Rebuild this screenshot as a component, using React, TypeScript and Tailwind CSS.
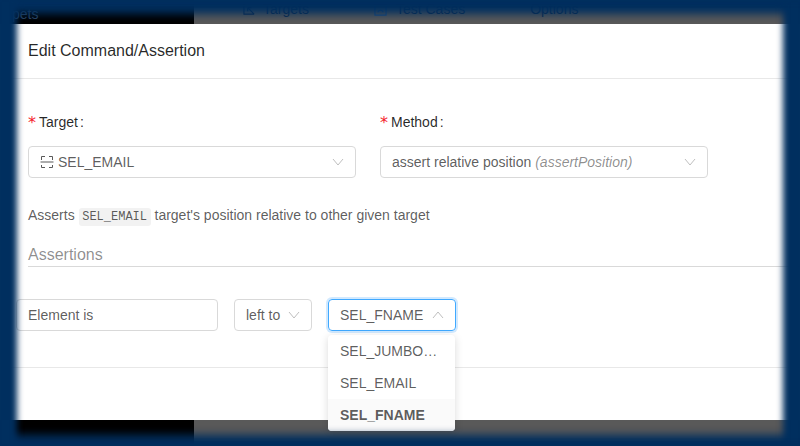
const sans = "font-['Liberation_Sans',Arial,sans-serif]";

function FieldLabel({ text }: { text: string }) {
  return (
    <div className="flex h-[20px] items-center text-[14px] text-black/85">
      <span className="mt-[1px] w-[11px] font-['DejaVu_Sans',sans-serif] text-[16px] leading-[14px] text-[#f5222d]">*</span>
      <span>{text}</span>
      <span className="ml-[2px]">:</span>
    </div>
  );
}

function TargetIcon() {
  return (
    <svg viewBox="0 0 14 14" className="mr-[4px] h-[14px] w-[14px] shrink-0" fill="none" stroke="#595959" strokeWidth="1">
      <path d="M1.5 5V1.5H5M9 1.5h3.5V5M1.5 10v2.5H5M9 12.5h3.5V10M0.5 7h13" />
    </svg>
  );
}

function Arrow({ up }: { up?: boolean }) {
  return (
    <svg viewBox="0 0 12 8" className="h-[8px] w-[12px] shrink-0" fill="none" stroke="#bfbfbf" strokeWidth="1">
      <path d={up ? "M1 7l5-6 5 6" : "M1 1l5 6 5-6"} />
    </svg>
  );
}

export default function App() {
  return (
    <div className={`relative h-[446px] w-[800px] overflow-hidden bg-[#595959] ${sans}`}>
      {/* page behind the modal */}
      <div className="flex h-full">
        <div className="h-full w-[194px] bg-black pl-[12px] pt-[4px] text-[14px] text-[#2e4763]">pets</div>
        <div className="-mt-[1px] flex h-[20px] flex-1 items-start text-[14px] text-[#0f2a4a]">
          <div className="ml-[49px] flex items-center gap-[7px]">
            <svg viewBox="0 0 14 14" className="h-[13px] w-[13px]" fill="none" stroke="#0f2a4a" strokeWidth="1.2">
              <path d="M1 1v11h11M5 5l7 7M5 5h4M5 5v4" />
            </svg>
            <span>Targets</span>
          </div>
          <div className="ml-[65px] flex items-center gap-[9px]">
            <svg viewBox="0 0 14 14" className="h-[13px] w-[13px]" fill="none" stroke="#1c4a80" strokeWidth="1.2">
              <path d="M1 1h12v12H1zM4 10c1-3 5-3 6 0" />
            </svg>
            <span>Test Cases</span>
          </div>
          <div className="ml-[65px]">Options</div>
        </div>
      </div>

      {/* modal */}
      <div className="absolute left-0 right-0 top-[24px] h-[396px] bg-white">
        <div className="flex h-[55px] items-center border-b border-[#e8e8e8] pl-[28px] text-[16px] text-black/85">
          Edit Command/Assertion
        </div>

        <div className="pl-[28px] pt-[33px]">
          <div className="flex gap-[24px]">
            <div className="w-[328px]">
              <FieldLabel text="Target" />
              <div className="mt-[14px] flex h-[32px] items-center justify-between rounded-[4px] border border-[#d9d9d9] px-[11px] text-[14px] text-black/65">
                <div className="flex items-center">
                  <TargetIcon />
                  <span>SEL_EMAIL</span>
                </div>
                <Arrow />
              </div>
            </div>
            <div className="w-[328px]">
              <FieldLabel text="Method" />
              <div className="mt-[14px] flex h-[32px] items-center justify-between rounded-[4px] border border-[#d9d9d9] px-[11px] text-[14px] text-black/65">
                <span>
                  assert relative position <em className="text-black/45">(assertPosition)</em>
                </span>
                <Arrow />
              </div>
            </div>
          </div>

          <div className="mt-[27px] flex h-[20px] items-center text-[14px] text-black/65">
            Asserts
            <code className="mx-[4px] mt-[4px] rounded-[3px] bg-[#f2f2f2] px-[3.5px] py-[1px] font-['Liberation_Mono','DejaVu_Sans_Mono',monospace] text-[12px] leading-[16px]">
              SEL_EMAIL
            </code>
            target's position relative to other given target
          </div>

          <div className="mt-[18px] h-[24px] border-b border-[#d9d9d9] text-[16px] leading-[23px] text-black/45">
            Assertions
          </div>
        </div>

        <div className="ml-[16px] mt-[32px] flex items-start gap-[16px]">
          <div className="flex h-[32px] w-[202px] items-center rounded-[4px] border border-[#d9d9d9] pl-[11px] text-[14px] text-black/65">
            Element is
          </div>
          <div className="flex h-[32px] w-[78px] items-center justify-between rounded-[4px] border border-[#d9d9d9] px-[11px] text-[14px] text-black/65">
            <span>left to</span>
            <Arrow />
          </div>
          <div className="relative w-[128px]">
            <div className="flex h-[32px] items-center justify-between rounded-[4px] border border-[#40a9ff] px-[11px] text-[14px] text-black/65 shadow-[0_0_0_2px_rgba(24,144,255,0.2)]">
              <span>SEL_FNAME</span>
              <Arrow up />
            </div>
            {/* open dropdown */}
            <div className="absolute left-0 top-[36px] w-[127px] overflow-hidden rounded-[4px] bg-white text-[14px] text-black/65 shadow-[0_2px_8px_rgba(0,0,0,0.15)]">
              <div className="flex h-[32px] items-center px-[12px]">SEL_JUMBO…</div>
              <div className="flex h-[32px] items-center px-[12px]">SEL_EMAIL</div>
              <div className="flex h-[32px] items-center bg-[#fafafa] px-[12px] font-bold">SEL_FNAME</div>
            </div>
          </div>
        </div>

        <div className="mt-[36px] border-t border-[#e8e8e8]" />
      </div>

      {/* navy vignette over everything */}
      <div className="pointer-events-none absolute inset-0 shadow-[inset_17px_0_6px_0_#002f5f,inset_-17px_0_6px_0_#002f5f,inset_0_14px_8px_0_#002f5f,inset_0_-11px_8px_0_#002f5f]" />
    </div>
  );
}
